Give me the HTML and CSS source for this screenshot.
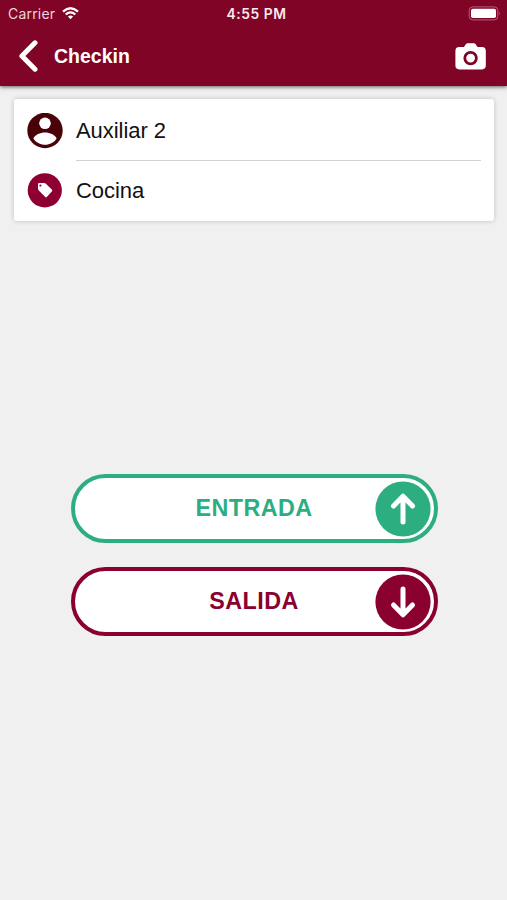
FILE: index.html
```html
<!DOCTYPE html>
<html lang="es">
<head>
<meta charset="utf-8">
<title>Checkin</title>
<link rel="stylesheet" href="styles.css">
</head>
<body>
<header class="header">
  <div class="status">
    <div class="carrier"><span>Carrier</span>
      <svg width="17" height="13" viewBox="0 0 17 13" fill="none" stroke="#fff" stroke-width="2.3"><path d="M1 4.6Q8.5-2 16 4.6M3.7 7.5Q8.5 3.3 13.3 7.5"/><path d="M5.9 9.6Q8.5 7.4 11.1 9.6L8.5 12.3Z" fill="#fff" stroke="none"/></svg>
    </div>
    <time class="time">4:55 PM</time>
    <svg class="battery" width="33" height="15" viewBox="0 0 33 15"><rect x="1.2" y=".9" width="28.6" height="13" rx="3.5" fill="none" stroke="#b3607f"/><rect x="3" y="2.8" width="25" height="9.2" rx="1.8" fill="#fff"/><path d="M31.2 5.5Q33 7.4 31.2 9.3Z" fill="#b3607f"/></svg>
  </div>
  <nav class="nav">
    <svg width="20" height="33" viewBox="0 0 20 33" fill="none" stroke="#fff" stroke-width="5" stroke-linecap="round" stroke-linejoin="round"><path d="M17 2.8L3.9 16L17 29.2"/></svg>
    <h1 class="title">Checkin</h1>
    <svg class="camera" width="31" height="27" viewBox="0 0 31 27"><path d="M9.3 3.5L10.8 1.2Q11.5.2 12.8.2H18.8Q20.1.2 20.7 1.2L22.1 3.5Q22.5 4.1 23.3 4.1H27Q30.8 4.1 30.8 7.9V22.6Q30.8 26.4 27 26.4H4.2Q.4 26.4.4 22.6V7.9Q.4 4.1 4.2 4.1H8.1Q8.9 4.1 9.3 3.5Z" fill="#fff"/><circle cx="15.6" cy="15.1" r="5.8" fill="none" stroke="#800426" stroke-width="2.8"/></svg>
  </nav>
</header>
<main>
  <section class="card">
    <div class="row">
      <svg width="36" height="36" viewBox="0 0 36 36"><circle cx="18" cy="17.5" r="17.7" fill="#4a0209"/><circle cx="18" cy="10.3" r="5.8" fill="#fff"/><path d="M6.4 25.4C8 21.8 13.1 19.5 18 19.5S28 21.8 29.6 25.4C27 29.3 23 31.7 18 31.7S9 29.3 6.4 25.4Z" fill="#fff"/></svg>
      <span class="label">Auxiliar 2</span>
    </div>
    <div class="row">
      <svg width="36" height="36" viewBox="0 0 36 36"><circle cx="17.8" cy="17.3" r="17.1" fill="#8f0032"/><path d="M11 11.2Q11 10 12.2 10H17.2Q18.2 10 18.9 10.7L24.8 16.6Q25.8 17.6 24.8 18.6L20 23.8Q19 24.8 18 23.8L11.8 17.4Q11 16.6 11 15.4Z" fill="#fff"/><circle cx="13.4" cy="12.5" r="1.1" fill="#8f0032"/></svg>
      <span class="label">Cocina</span>
    </div>
  </section>
  <div class="actions">
    <button class="action entry"><span>ENTRADA</span>
      <svg width="56" height="56" viewBox="0 0 56 56"><circle cx="28" cy="28" r="27.6" fill="currentColor"/><path d="M28 41V15.5M18.5 25L28 15.2L37.5 25" fill="none" stroke="#fff" stroke-width="5" stroke-linecap="round" stroke-linejoin="round"/></svg>
    </button>
    <button class="action exit"><span>SALIDA</span>
      <svg width="56" height="56" viewBox="0 0 56 56"><circle cx="28" cy="28" r="27.6" fill="currentColor"/><path d="M28 15V40.5M18.5 31L28 40.8L37.5 31" fill="none" stroke="#fff" stroke-width="5" stroke-linecap="round" stroke-linejoin="round"/></svg>
    </button>
  </div>
</main>
</body>
</html>
```
FILE: styles.css
```css
* { box-sizing: border-box; }
body { margin: 0; height: 900px; overflow: hidden; background: #f0f0f0; font-family: "Liberation Sans", sans-serif; }
svg { display: block; flex: none; }
.header { height: 86px; background: #800426; color: #fff; box-shadow: 0 1px 4px rgba(0,0,0,.6); }
.status { height: 27px; display: grid; grid-template-columns: 1fr auto 1fr; align-items: center; padding: 0 6px 0 8px; font-family: Inter, sans-serif; }
.carrier { display: flex; align-items: center; gap: 7px; font-size: 14px; letter-spacing: .2px; color: #ecd5dc; }
.time { font-size: 13.8px; font-weight: 600; letter-spacing: .6px; color: #fae9ee; margin-left: 4px; }
.battery { justify-self: end; }
.nav { height: 59px; display: flex; align-items: center; padding: 0 21px 1px 18px; }
.title { margin: 0 0 1px 16px; font-size: 19.5px; line-height: 24px; font-weight: 700; }
.camera { margin-left: auto; }
.card { margin: 13px 13px 0 14px; height: 122px; padding: 2px 13px 0; background: #fff; border-radius: 3px; box-shadow: 0 0 5px rgba(0,0,0,.2); }
.row { height: 60px; display: flex; align-items: center; gap: 13px; }
.label { flex: 1; height: 60px; line-height: 59px; font-size: 22px; letter-spacing: -.05px; color: #111; }
.row:first-child .label { border-bottom: 1px solid #d2d2d2; }
.actions { margin: 253px 69.5px 0 70.5px; display: grid; gap: 24px; }
.action { width: 367px; height: 69px; display: grid; grid-template-columns: 1fr 56px; align-items: center; padding: 0 3px 0 59px; border: 4px solid; border-radius: 35px; background: #fff; font: 700 23.3px "Liberation Sans", sans-serif; }
.action span { text-align: center; letter-spacing: .45px; padding-bottom: 1px; }
.entry { color: #2dae80; }
.exit { color: #8a002f; }
```
